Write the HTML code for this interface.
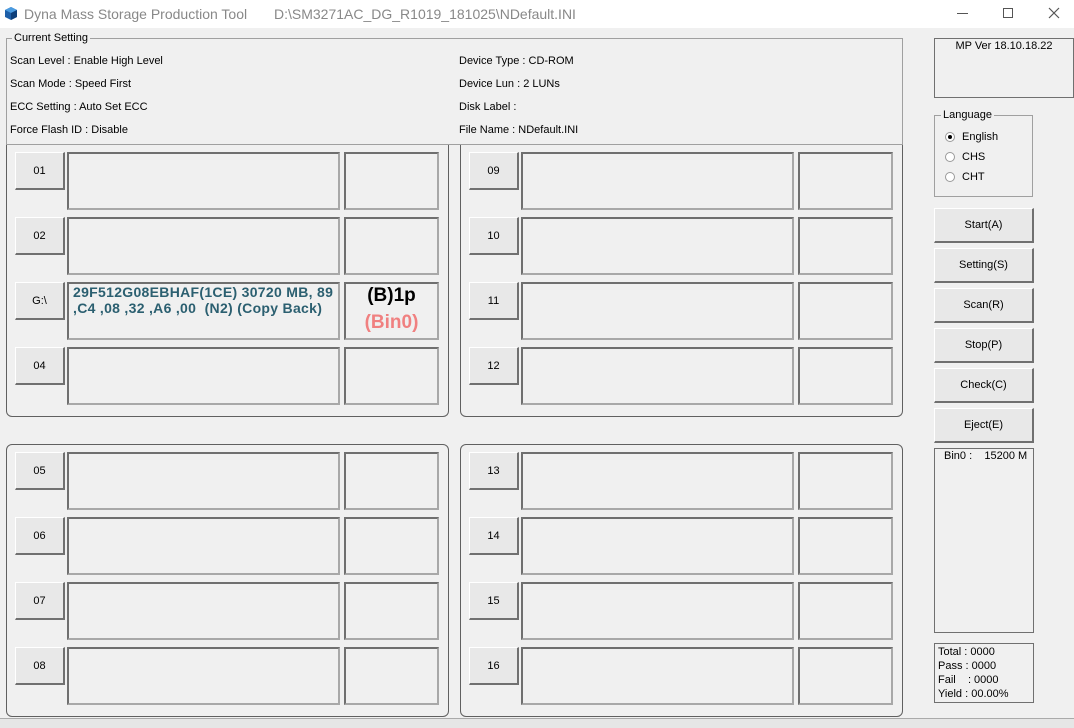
<!DOCTYPE html><html><head><style>
*{margin:0;padding:0;box-sizing:border-box}
body{width:1074px;height:728px;background:#f0f0f0;font-family:"Liberation Sans",Arial,sans-serif;font-size:11px;color:#000;position:relative;overflow:hidden}
.a{position:absolute}
.tb{left:0;top:0;width:1074px;height:28px;background:#fff}
.grp{border:1px solid #a0a0a0;border-radius:0}
.pan{border:1px solid #606060;border-radius:6px}
.btn{background:#e8e8e8;border:1px solid #adadad;border-right:2px solid #707070;border-bottom:2px solid #707070;border-top-color:#fff;border-left-color:#fff;text-align:center;font-size:11px}
.box{border:2px solid #7a7a7a;border-right-color:#a8a8a8;border-bottom-color:#a8a8a8;border-top-color:#6f6f6f;border-left-color:#6f6f6f}
.rb{border:1px solid #a0a0a0;background:#f0f0f0}
.rad{width:10px;height:10px;border-radius:50%;border:1px solid #9a9a9a;background:#fff}
</style></head><body>
<div class="a tb"></div>
<svg class="a" style="left:4px;top:6px" width="14" height="15" viewBox="0 0 14 15"><path d="M7 1L13 4V11L7 14L1 11V4Z" fill="#1e5fa8"/><path d="M1 4L7 7L13 4L7 1Z" fill="#4a9be0"/><path d="M7 7V14L13 11V4Z" fill="#0d3f7a"/></svg>
<div class="a" style="left:24px;top:6px;font-size:14px;color:#888">Dyna Mass Storage Production Tool</div>
<div class="a" style="left:274px;top:6px;font-size:14px;color:#888">D:\SM3271AC_DG_R1019_181025\NDefault.INI</div>
<div class="a" style="left:957px;top:13px;width:11px;height:1px;background:#555"></div>
<div class="a" style="left:1003px;top:8px;width:10px;height:10px;border:1px solid #555"></div>
<svg class="a" style="left:1048px;top:7px" width="12" height="12"><path d="M1 1L11 11M11 1L1 11" stroke="#555" stroke-width="1.2"/></svg>

<div class="a grp" style="left:6px;top:38px;width:897px;height:107px"></div>
<div class="a" style="left:12px;top:32px;background:#f0f0f0;padding:0 2px">Current Setting</div>
<div class="a" style="left:10px;top:55px">Scan Level : Enable High Level</div>
<div class="a" style="left:10px;top:78px">Scan Mode : Speed First</div>
<div class="a" style="left:10px;top:101px">ECC Setting : Auto Set ECC</div>
<div class="a" style="left:10px;top:124px">Force Flash ID : Disable</div>
<div class="a" style="left:459px;top:55px">Device Type : CD-ROM</div>
<div class="a" style="left:459px;top:78px">Device Lun : 2 LUNs</div>
<div class="a" style="left:459px;top:101px">Disk Label :</div>
<div class="a" style="left:459px;top:124px">File Name : NDefault.INI</div>

<div class="a pan" style="left:6px;top:145px;width:443px;height:272px;border-top-left-radius:0;border-top-right-radius:0;border-top:none"></div>
<div class="a pan" style="left:460px;top:145px;width:443px;height:272px;border-top-left-radius:0;border-top-right-radius:0;border-top:none"></div>
<div class="a pan" style="left:6px;top:444px;width:443px;height:273px"></div>
<div class="a pan" style="left:460px;top:444px;width:443px;height:273px"></div>

<div id="slots"></div>
<script>
var s='',L=[['01','02','G:\\','04'],['09','10','11','12'],['05','06','07','08'],['13','14','15','16']],X=[15,469,15,469],Y=[152,152,452,452];
for(var p=0;p<4;p++)for(var i=0;i<4;i++){var x=X[p],y=Y[p]+i*65;
s+='<div class="a btn" style="left:'+x+'px;top:'+y+'px;width:50px;height:38px;line-height:36px">'+L[p][i]+'</div>';
s+='<div class="a box" style="left:'+(x+52)+'px;top:'+y+'px;width:273px;height:58px"></div>';
s+='<div class="a box" style="left:'+(x+329)+'px;top:'+y+'px;width:95px;height:58px"></div>';}
document.getElementById('slots').innerHTML=s;
</script>
<div class="a" style="left:73px;top:284px;font-size:14px;font-weight:bold;color:#2b5f70;line-height:16px;white-space:pre;letter-spacing:0.3px">29F512G08EBHAF(1CE) 30720 MB, 89
,C4 ,08 ,32 ,A6 ,00  (N2) (Copy Back)</div>
<div class="a" style="left:344px;top:284px;width:95px;text-align:center;font-size:19px;font-weight:bold;line-height:24px">(B)1p</div>
<div class="a" style="left:344px;top:310px;width:95px;text-align:center;font-size:19px;font-weight:bold;color:#f08080;line-height:26px">(Bin0)</div>

<div class="a rb" style="left:934px;top:38px;width:140px;height:60px;border-color:#707070"></div>
<div class="a" style="left:934px;top:40px;width:140px;text-align:center">MP Ver 18.10.18.22</div>
<div class="a grp" style="left:934px;top:115px;width:99px;height:82px"></div>
<div class="a" style="left:941px;top:109px;background:#f0f0f0;padding:0 2px">Language</div>
<div class="a rad" style="left:945px;top:132px"></div><div class="a" style="left:948px;top:135px;width:4px;height:4px;border-radius:50%;background:#000"></div>
<div class="a rad" style="left:945px;top:152px"></div><div class="a rad" style="left:945px;top:172px"></div>
<div class="a" style="left:962px;top:131px">English</div>
<div class="a" style="left:962px;top:151px">CHS</div>
<div class="a" style="left:962px;top:171px">CHT</div>
<div class="a btn" style="left:934px;top:208px;width:100px;height:35px;line-height:33px">Start(A)</div>
<div class="a btn" style="left:934px;top:248px;width:100px;height:35px;line-height:33px">Setting(S)</div>
<div class="a btn" style="left:934px;top:288px;width:100px;height:35px;line-height:33px">Scan(R)</div>
<div class="a btn" style="left:934px;top:328px;width:100px;height:35px;line-height:33px">Stop(P)</div>
<div class="a btn" style="left:934px;top:368px;width:100px;height:35px;line-height:33px">Check(C)</div>
<div class="a btn" style="left:934px;top:408px;width:100px;height:35px;line-height:33px">Eject(E)</div>
<div class="a rb" style="left:934px;top:448px;width:100px;height:185px;border-color:#707070"></div>
<div class="a" style="left:944px;top:450px;white-space:pre">Bin0 :    15200 M</div>
<div class="a rb" style="left:934px;top:643px;width:100px;height:60px;border-color:#707070"></div>
<div class="a" style="left:938px;top:645px;line-height:14px;white-space:pre">Total : 0000
Pass : 0000
Fail    : 0000
Yield : 00.00%</div>
<div class="a" style="left:0;top:718px;width:1074px;height:10px;background:#e6e6e6;border-top:1px solid #aaa"></div>
</body></html>
